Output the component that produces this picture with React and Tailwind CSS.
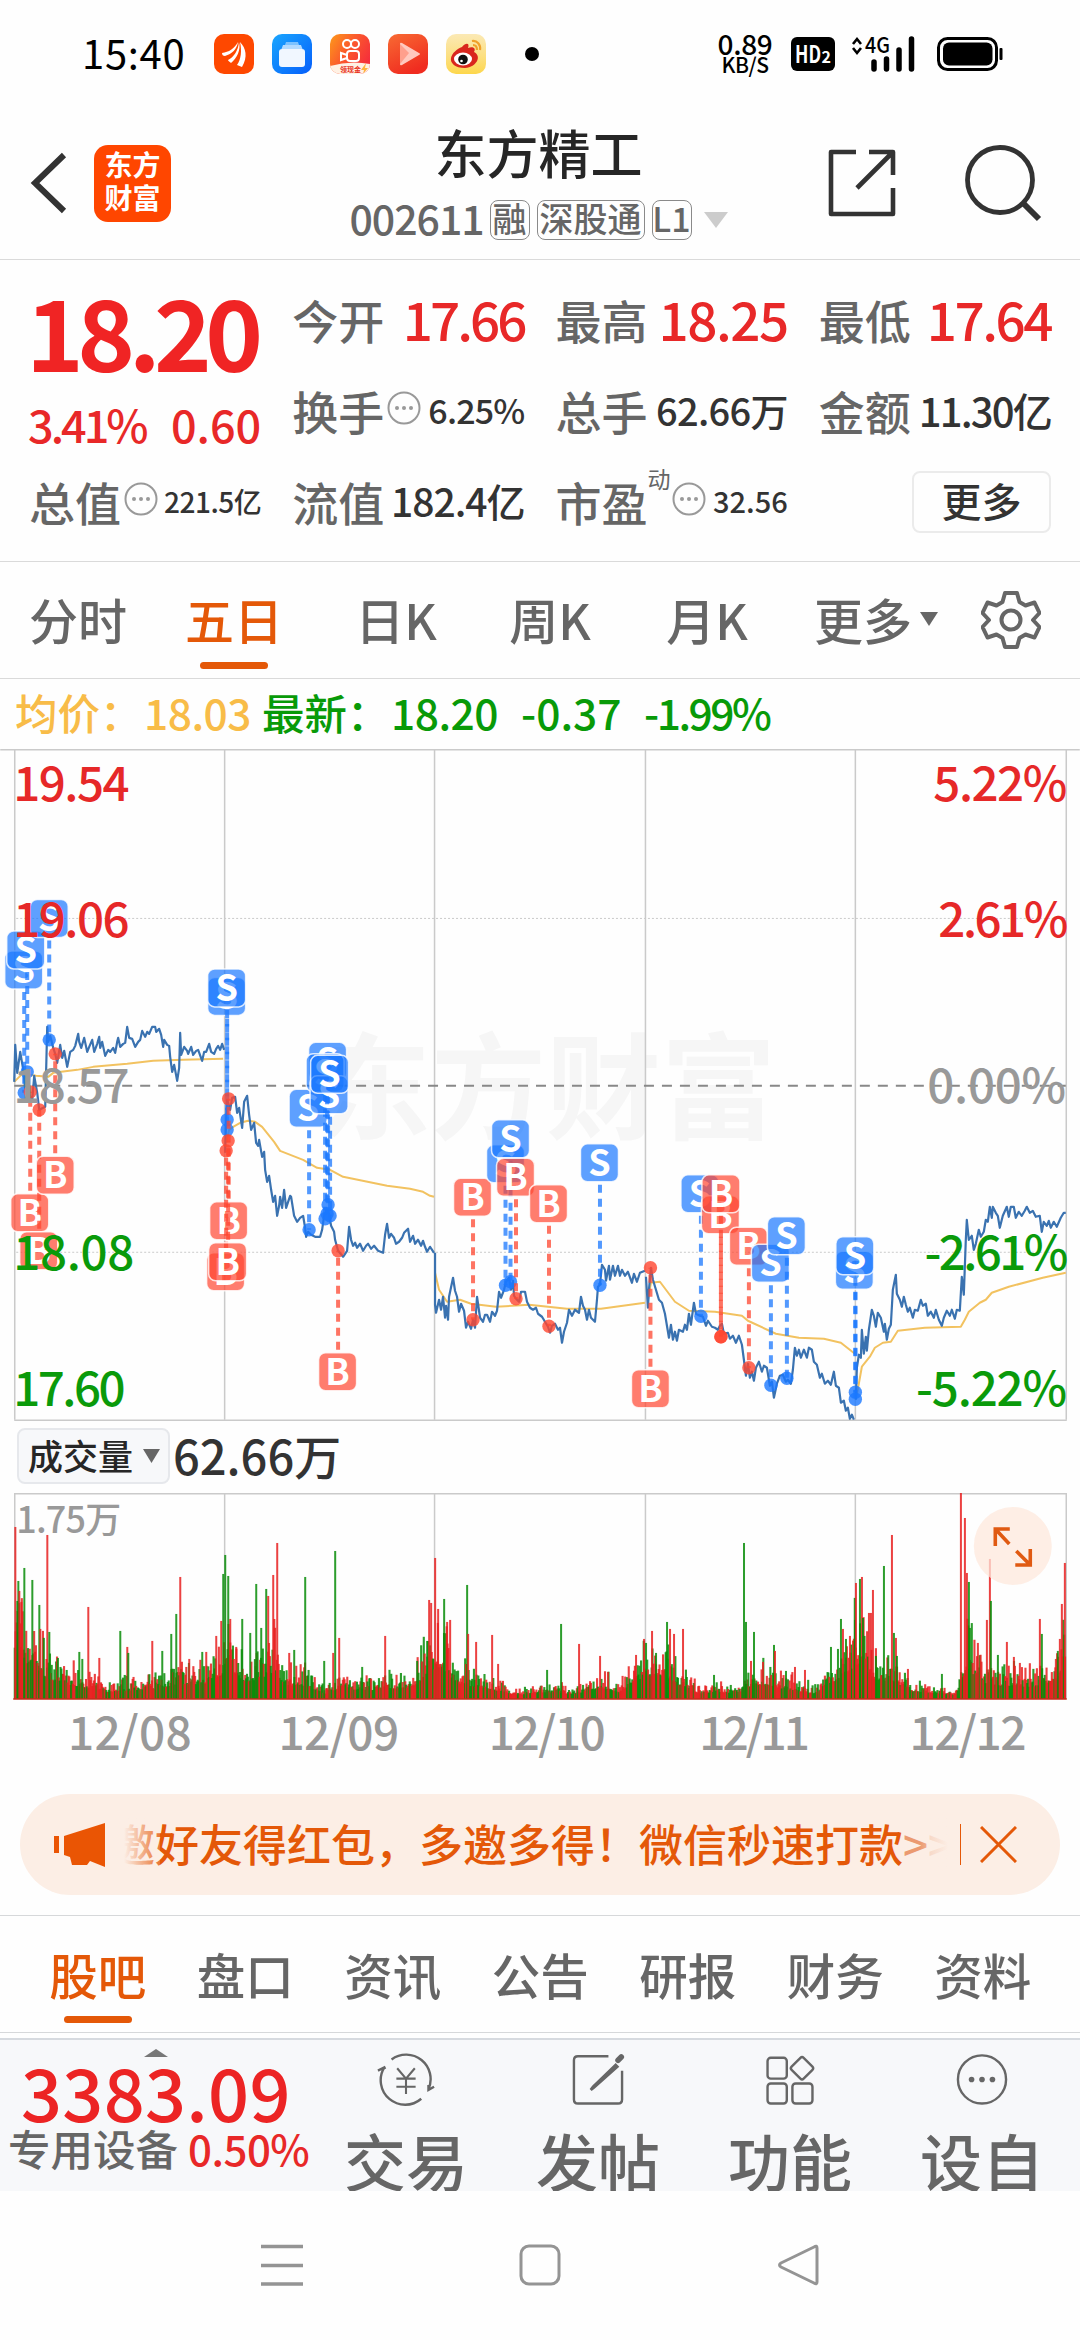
import React from 'react';

const QUOTE_RED = 'text-[#e82828]';

const periodTabs = [
  { label: '分时', cls: 'w-[156px]' },
  { label: '五日', cls: 'w-[156px]', active: true },
  { label: '日K', cls: 'w-[168px]' },
  { label: '周K', cls: 'w-[140px]' },
  { label: '月K', cls: 'w-[174px]' },
];

const infoTabs = ['股吧', '盘口', '资讯', '公告', '研报', '财务', '资料'];

const dates = [
  { label: '12/08', cls: 'tracking-[0.2px]' },
  { label: '12/09', cls: 'tracking-[-0.5px]' },
  { label: '12/10', cls: 'tracking-[-1.5px]' },
  { label: '12/11', cls: 'tracking-[-3px]' },
  { label: '12/12', cls: 'tracking-[-1.5px]' },
];

const gridX = [14.5, 224.5, 434.5, 645.5, 855.5, 1066.5];

// one polyline per trading day
const priceLines = [
  '14,1082 15,1045 17,1073 20,1052 23,1070 25,1090 28,1093 32,1100 34,1076 37,1093 39,1110 45,1107 47,1027 48,1042 50,1036 53,1048 55,1054 57,1063 60,1045 62,1058 64,1051 67,1067 70,1052 73,1050 75,1046 78,1034 79,1042 81,1048 84,1038 87,1052 89,1047 92,1040 94,1052 97,1044 99,1037 100,1048 102,1042 105,1056 108,1050 110,1052 113,1048 115,1053 117,1042 118,1038 120,1047 123,1044 125,1043 127,1027 129,1038 132,1039 135,1047 138,1042 140,1040 142,1031 145,1037 147,1032 149,1034 152,1027 155,1027 156,1032 159,1029 161,1035 163,1047 164,1040 167,1045 169,1046 170,1057 172,1072 174,1065 177,1081 179,1068 180,1033 181,1055 184,1047 187,1051 188,1054 191,1047 193,1055 196,1051 198,1050 202,1061 204,1052 206,1052 209,1044 211,1052 214,1054 216,1049 218,1046 220,1050 222,1044 224,1050',
  '225,1153 226,1120 227,1100 230,1110 232,1098 235,1097 237,1113 239,1108 242,1128 244,1102 247,1096 249,1115 251,1130 254,1123 256,1143 258,1146 259,1140 262,1157 264,1152 265,1170 267,1182 269,1176 271,1190 273,1202 275,1196 277,1216 279,1206 280,1197 282,1208 284,1190 286,1208 288,1202 290,1196 291,1197 294,1216 297,1222 300,1218 303,1216 305,1228 306,1237 308,1232 311,1235 315,1237 320,1237 322,1230 324,1216 328,1210 331,1226 334,1232 335,1240 338,1251 343,1257 347,1251 349,1227 351,1240 353,1246 355,1243 357,1248 360,1244 363,1251 366,1246 368,1244 371,1249 374,1246 378,1251 383,1253 385,1235 387,1224 389,1238 391,1234 394,1238 396,1244 399,1242 402,1238 404,1233 408,1229 410,1242 413,1236 415,1244 418,1240 421,1246 423,1241 425,1247 427,1252 430,1247 434,1253',
  '435,1253 435,1305 436,1313 439,1300 441,1310 443,1297 445,1318 446,1306 448,1320 449,1297 453,1278 455,1291 457,1297 459,1312 461,1304 464,1311 466,1328 468,1322 471,1329 473,1320 475,1328 477,1297 479,1311 480,1318 483,1322 485,1315 487,1315 490,1322 492,1312 495,1316 497,1311 499,1292 501,1298 504,1290 506,1282 509,1278 511,1290 513,1281 514,1296 516,1299 519,1302 521,1292 525,1292 527,1302 530,1308 533,1310 536,1308 538,1314 542,1317 545,1322 548,1327 550,1333 552,1326 555,1324 558,1330 560,1328 562,1343 564,1332 567,1323 569,1310 572,1316 575,1310 579,1313 581,1297 583,1306 585,1310 587,1320 589,1310 591,1318 595,1322 597,1300 598,1287 600,1285 602,1265 605,1270 606,1281 609,1266 610,1280 613,1266 615,1276 618,1266 620,1276 622,1270 625,1276 628,1272 632,1283 634,1274 637,1282 640,1273 645,1271',
  '646,1277 648,1308 649,1290 651,1268 653,1280 656,1290 659,1300 662,1303 665,1314 667,1326 669,1338 671,1325 673,1340 675,1332 677,1341 679,1330 683,1332 685,1325 687,1330 689,1314 691,1325 694,1303 696,1314 700,1316 703,1317 706,1326 708,1321 712,1327 715,1328 718,1330 720,1326 722,1324 724,1334 728,1333 730,1339 733,1336 736,1343 739,1336 742,1345 744,1360 746,1376 748,1364 750,1378 752,1372 754,1381 756,1368 759,1362 762,1372 764,1366 767,1368 770,1386 772,1382 774,1398 777,1384 780,1376 783,1375 786,1382 788,1380 791,1384 793,1370 795,1348 797,1356 799,1350 801,1358 804,1350 807,1358 809,1348 812,1350 814,1362 817,1365 820,1378 822,1374 825,1384 828,1381 831,1385 834,1372 836,1386 839,1388 841,1403 844,1401 846,1411 848,1408 850,1419 852,1415 854,1420',
  '856,1400 857,1368 859,1355 861,1358 862,1330 864,1354 866,1337 867,1351 869,1330 872,1310 874,1316 876,1327 878,1313 881,1318 884,1332 885,1324 887,1340 889,1329 891,1325 893,1290 896,1275 897,1294 900,1300 902,1307 904,1297 906,1305 908,1312 910,1308 913,1318 915,1310 918,1311 921,1300 923,1306 926,1304 928,1316 931,1312 934,1318 936,1310 939,1320 942,1326 944,1318 947,1311 950,1316 952,1310 955,1319 957,1310 960,1311 962,1277 964,1295 966,1240 967,1220 969,1240 972,1236 974,1250 976,1244 979,1230 981,1237 984,1232 986,1220 988,1222 990,1207 992,1218 993,1207 996,1213 998,1216 1000,1228 1003,1216 1007,1207 1009,1217 1011,1207 1014,1207 1016,1218 1019,1212 1022,1216 1025,1211 1027,1207 1030,1213 1033,1211 1036,1217 1040,1216 1042,1232 1044,1222 1047,1226 1049,1221 1051,1228 1054,1222 1057,1227 1061,1218 1064,1213 1066,1213',
];

const averageLines = [
  '14,1082 22,1074 36,1076 48,1077 53,1073 77,1070 93,1067 127,1064 153,1061 183,1060 223,1059',
  '226,1143 229,1130 233,1127 240,1123 248,1121 255,1122 262,1127 270,1137 274,1142 280,1151 303,1160 317,1168 330,1170 343,1177 387,1186 410,1189 423,1192 430,1196 434,1197',
  '435,1273 439,1290 447,1302 460,1300 471,1304 496,1307 529,1305 567,1309 601,1309 645,1303',
  '648,1300 651,1283 660,1282 666,1290 675,1302 689,1311 715,1312 742,1316 748,1321 776,1334 799,1338 824,1339 841,1343 855,1354',
  '857,1395 862,1367 870,1357 875,1348 883,1343 891,1342 898,1331 925,1328 961,1327 965,1320 969,1312 980,1303 986,1300 992,1293 1009,1287 1043,1278 1066,1273',
];

// [side, badge x, badge y, dot x, dot y]
const trades = [
  ['S', 23.5, 970, 24, 1093],
  ['S', 25.5, 950, 27, 1072],
  ['S', 49, 918.5, 49, 1040],
  ['B', 29.5, 1213, 30, 1092],
  ['B', 38.5, 1251, 39, 1110],
  ['B', 55, 1175.5, 55, 1054],
  ['S', 226.5, 996.5, 227, 1130],
  ['S', 226.5, 988, 227, 1120],
  ['B', 228.5, 1221, 228.5, 1099],
  ['B', 225.5, 1272, 226, 1151],
  ['B', 227.5, 1262, 228, 1141],
  ['S', 308, 1108.5, 309, 1230],
  ['S', 327.5, 1061.5, 328, 1205],
  ['S', 325, 1073, 325, 1219],
  ['S', 329, 1095, 330, 1216],
  ['S', 329.5, 1074.5, 327, 1214],
  ['B', 337.5, 1372, 338, 1251],
  ['B', 472.5, 1197.5, 473, 1320],
  ['S', 505.5, 1164, 505.5, 1285.5],
  ['S', 510.5, 1139, 510.5, 1282],
  ['B', 515.5, 1177.5, 516, 1299],
  ['B', 548.5, 1204, 549, 1326.5],
  ['S', 599.5, 1163, 600, 1285.5],
  ['B', 650.5, 1389, 650.5, 1268],
  ['S', 700, 1194, 701, 1316.5],
  ['B', 720.5, 1215, 721, 1337],
  ['B', 721, 1194, 721, 1337],
  ['B', 748.5, 1246.5, 749, 1368],
  ['S', 770.5, 1263.5, 771, 1385.5],
  ['S', 786.5, 1236, 787, 1378.5],
  ['S', 854.5, 1270.5, 855.5, 1392.5],
  ['S', 855, 1256, 855.5, 1399.5],
];

const volumeBase = [
  [14, 80], [25, 55], [40, 40], [55, 24], [75, 20], [95, 14], [110, 10], [140, 14], [160, 16],
  [180, 22], [205, 22], [220, 35], [230, 45], [245, 26], [260, 30], [275, 42], [285, 20], [305, 20],
  [325, 8], [345, 18], [360, 12], [385, 15], [415, 18], [430, 45], [442, 45], [455, 25], [475, 18],
  [490, 12], [520, 6], [545, 10], [575, 7], [600, 16], [620, 10], [645, 35], [665, 36], [680, 20],
  [700, 8], [740, 10], [755, 22], [790, 14], [815, 8], [840, 32], [860, 55], [875, 30], [895, 25],
  [910, 12], [955, 6], [961, 20], [967, 50], [980, 25], [1000, 20], [1030, 18], [1045, 22], [1058, 32], [1067, 50],
];

const volumeSpikes = [
  [15, 172, 'r'], [17, 98, 'g'], [18, 118, 'g'], [19, 108, 'r'], [21, 97, 'r'], [24, 131, 'g'], [32, 119, 'g'],
  [39, 94, 'g'], [40, 70, 'r'], [47, 164, 'r'], [49, 67, 'g'], [79, 47, 'g'], [82, 40, 'g'], [88, 92, 'r'], [99, 41, 'r'],
  [120, 68, 'g'], [127, 52, 'r'], [128, 46, 'g'], [152, 58, 'r'], [162, 48, 'g'], [171, 65, 'g'], [176, 85, 'g'],
  [180, 122, 'r'], [189, 40, 'r'], [202, 47, 'g'], [206, 47, 'r'], [216, 63, 'r'], [221, 78, 'r'], [223, 125, 'g'],
  [225, 144, 'g'], [228, 123, 'g'], [230, 80, 'r'], [236, 52, 'r'], [242, 80, 'g'], [250, 66, 'g'], [256, 115, 'g'],
  [261, 71, 'g'], [266, 110, 'g'], [268, 103, 'r'], [273, 124, 'r'], [277, 156, 'r'], [289, 46, 'r'], [294, 49, 'g'],
  [305, 122, 'g'], [324, 38, 'g'], [333, 46, 'r'], [335, 148, 'g'], [339, 61, 'r'], [362, 32, 'g'], [385, 63, 'r'],
  [417, 38, 'g'], [427, 58, 'g'], [429, 99, 'r'], [431, 96, 'r'], [435, 141, 'r'], [438, 90, 'r'], [444, 100, 'g'],
  [447, 77, 'r'], [450, 79, 'r'], [467, 114, 'g'], [468, 65, 'r'], [476, 57, 'r'], [492, 64, 'r'], [498, 35, 'r'],
  [547, 29, 'g'], [561, 75, 'g'], [579, 55, 'r'], [600, 43, 'r'], [608, 27, 'r'], [636, 44, 'r'], [644, 60, 'r'],
  [646, 56, 'g'], [652, 68, 'r'], [656, 46, 'g'], [667, 77, 'g'], [670, 70, 'r'], [674, 65, 'r'], [683, 70, 'r'],
  [714, 24, 'g'], [744, 156, 'g'], [746, 77, 'g'], [751, 38, 'r'], [754, 67, 'g'], [763, 37, 'r'], [774, 54, 'g'],
  [775, 48, 'r'], [786, 28, 'g'], [795, 32, 'r'], [805, 29, 'r'], [831, 52, 'g'], [838, 50, 'g'], [841, 80, 'g'],
  [843, 70, 'r'], [846, 60, 'g'], [850, 63, 'r'], [855, 79, 'g'], [856, 116, 'r'], [860, 120, 'g'], [862, 122, 'r'],
  [863, 81, 'g'], [869, 86, 'r'], [873, 109, 'r'], [871, 86, 'r'], [876, 43, 'g'], [884, 133, 'g'], [892, 164, 'r'],
  [894, 66, 'g'], [896, 61, 'r'], [897, 43, 'g'], [908, 30, 'r'], [942, 25, 'g'], [961, 206, 'r'], [965, 181, 'r'],
  [967, 126, 'r'], [969, 117, 'g'], [970, 71, 'g'], [978, 56, 'r'], [987, 79, 'r'], [990, 140, 'r'], [991, 98, 'g'],
  [998, 44, 'g'], [1007, 57, 'r'], [1014, 42, 'r'], [1020, 36, 'r'], [1040, 80, 'r'], [1042, 65, 'g'], [1056, 40, 'r'],
  [1058, 48, 'g'], [1060, 60, 'r'], [1062, 95, 'r'], [1065, 136, 'r'],
];

const baseAt = (x) => {
  const i = Math.max(1, volumeBase.findIndex(([px]) => px >= x));
  const [x0, y0] = volumeBase[i - 1];
  const [x1, y1] = volumeBase[i];
  return y0 + ((y1 - y0) * (x - x0)) / (x1 - x0);
};

const buildBars = () => {
  const bars = [];
  let seed = 7;
  const rand = () => {
    seed = (seed * 16807) % 2147483647;
    return seed / 2147483647;
  };
  for (let x = 14.5; x < 1066; x += 0.88) {
    const h = baseAt(x) * (0.65 + rand() * rand() * 1.5);
    bars.push([x, h, rand() > 0.46 ? 'r' : 'g']);
  }
  return bars;
};

const volumeBars = buildBars();

const barColor = { r: '#e82020', g: '#088c08' };

const StatusBar = () => (
  <div className="flex h-[108px] items-center pl-[82px] pr-[77px] text-black">
    <span className="mb-1 w-[132px] text-[40px] leading-none tracking-[0.7px]">15:40</span>
    <div className="flex gap-[18px]">
      <svg width="40" height="40" viewBox="0 0 40 40">
        <rect width="40" height="40" rx="10" fill="#fe4800" />
        <path d="M8 19c7-1 12-4 16-11-1 7-6 12-13 14-2 0-3-1-3-3zM14 26c6-3 10-9 11-18 2 8-2 16-8 21-1-1-3-2-3-3zM23 31c4-6 5-14 3-23 6 6 8 15 2 25z" fill="#fff" />
      </svg>
      <svg width="40" height="40" viewBox="0 0 40 40">
        <defs>
          <linearGradient id="files" x1="0" y1="0" x2="1" y2="1">
            <stop offset="0" stopColor="#1aa6fe" />
            <stop offset="1" stopColor="#055efb" />
          </linearGradient>
        </defs>
        <rect width="40" height="40" rx="10" fill="url(#files)" />
        <path d="M14 8h12l1 3H13z" fill="#7cc2ff" />
        <path d="M11 11h18l1.500 4h-21z" fill="#b2daff" />
        <rect x="7" y="15" width="26" height="18" rx="3" fill="#f1f7ff" />
      </svg>
      <svg width="40" height="40" viewBox="0 0 40 40">
        <defs>
          <linearGradient id="ks" x1="0" y1="0" x2="1" y2="0.600">
            <stop offset="0" stopColor="#fd9a1b" />
            <stop offset="0.500" stopColor="#fb5a2c" />
            <stop offset="1" stopColor="#f52f3b" />
          </linearGradient>
          <clipPath id="ksClip"><rect width="40" height="40" rx="10" /></clipPath>
        </defs>
        <g clipPath="url(#ksClip)">
          <rect width="40" height="40" fill="url(#ks)" />
          <path d="M0 32q20-6 40-2v10H0z" fill="#fff1e4" />
          <g fill="none" stroke="#fff" strokeWidth="2">
            <circle cx="17" cy="10" r="4" />
            <circle cx="25" cy="10" r="4" />
            <rect x="17" y="17" width="12" height="10" rx="3" />
            <path d="M17 21l-6-2v7l6-2" />
          </g>
          <text x="10" y="38" fontSize="7" fontWeight="700" fill="#e8321e">领现金</text>
          <path d="M36 29l-5 7h3l-1 4 5-6h-3z" fill="#ffb23e" />
        </g>
      </svg>
      <svg width="40" height="40" viewBox="0 0 40 40">
        <defs>
          <linearGradient id="video" x1="0" y1="0" x2="0.500" y2="1">
            <stop offset="0" stopColor="#f86b33" />
            <stop offset="1" stopColor="#f02c20" />
          </linearGradient>
        </defs>
        <rect width="40" height="40" rx="10" fill="url(#video)" />
        <path d="M12 10q0-2 2-1l17 10q2 1 0 2L14 31q-2 1-2-1z" fill="#ffc9bf" />
        <path d="M12 10v20l9-11z" fill="#ff9f8d" />
      </svg>
      <div className="flex h-10 w-10 items-center justify-center rounded-[10px] bg-linear-to-b from-[#fbe9b4] to-[#fdd74a]">
        <svg width="34" height="34" viewBox="0 0 34 34">
          <path d="M13 10c4-5 8-4 6 1 6-2 8 1 6 4 8 4 3 15-9 16C6 31 1 26 2 21c1-5 6-9 11-11z" fill="#d9261d" />
          <ellipse cx="14" cy="22" rx="9" ry="6.500" fill="#fff" />
          <circle cx="14" cy="22.500" r="4.800" fill="#111" />
          <circle cx="12.500" cy="24" r="1.300" fill="#fff" />
          <path d="M23 4c5-1 9 4 8 9M24 8c3 0 4 2 4 5" fill="none" stroke="#f0a12b" strokeWidth="2.200" />
        </svg>
      </div>
    </div>
    <div className="ml-[39px] h-3.5 w-3.5 rounded-full bg-black" />
    <div className="ml-auto flex items-center">
      <div className="mr-4 flex w-[60px] flex-col items-center font-medium">
        <span className="text-[28px] leading-[22px] tracking-[-0.3px]">0.89</span>
        <span className="text-[21px] leading-[21px] tracking-[-0.5px]">KB/S</span>
      </div>
      <svg width="44" height="34" viewBox="0 0 44 34" className="mr-4">
        <rect width="44" height="34" rx="6" />
        <text x="4" y="26" fontSize="24" fontWeight="700" fill="#fff" textLength="26" lengthAdjust="spacingAndGlyphs">HD</text>
        <text x="30.500" y="26" fontSize="16" fontWeight="700" fill="#fff">2</text>
      </svg>
      <svg width="66" height="36" viewBox="0 0 66 36" className="mr-5">
        <path d="M2 8l4-5 4 5M2 12l4 5 4-5" fill="none" stroke="#000" strokeWidth="2.600" />
        <text x="14" y="17" fontSize="22" fontWeight="500" textLength="25" lengthAdjust="spacingAndGlyphs">4G</text>
        <path d="M23 26v7M35.500 23v10M48 14v19M60.500 3v30" stroke="#000" strokeWidth="5.500" strokeLinecap="round" />
      </svg>
      <svg width="66" height="34" viewBox="0 0 66 34">
        <rect x="1.500" y="1.500" width="58" height="31" rx="9" fill="none" stroke="#000" strokeWidth="3" />
        <rect x="6" y="5.500" width="49.500" height="23" rx="6" />
        <rect x="62.500" y="11" width="3" height="12" rx="1" />
      </svg>
    </div>
  </div>
);

const Badge = ({ children, cls }) => (
  <span className={`flex h-10 items-center justify-center rounded-[8px] border border-[#8a8a8a] pb-1 text-[34px] font-medium leading-none ${cls}`}>
    {children}
  </span>
);

const Header = () => (
  <div className="flex h-[152px] items-center border-b border-[#dadada] pl-[29px] pr-[38px]">
    <svg width="40" height="64" viewBox="0 0 40 64">
      <path d="M35 4L6 32l29 28" fill="none" stroke="#333" strokeWidth="6" />
    </svg>
    <div className="ml-[25px] flex h-[77px] w-[77px] flex-col items-center justify-center rounded-[14px] bg-[#ff4600] pb-1 text-[28px] font-bold leading-[33px] text-white">
      <span>东方</span>
      <span>财富</span>
    </div>
    <div className="flex flex-1 flex-col items-center pl-[78px]">
      <h1 className="text-[52px] font-medium leading-[56px] text-[#262626]">东方精工</h1>
      <div className="mt-[17px] flex items-center text-[#666]">
        <span className="mb-1 mr-[9px] w-[131px] text-[41px] font-medium leading-none tracking-[-1px]">002611</span>
        <Badge cls="w-10 mr-[7px]">融</Badge>
        <Badge cls="w-[108px] mr-[7px]">深股通</Badge>
        <Badge cls="w-10">L1</Badge>
        <svg width="24" height="16" viewBox="0 0 24 16" className="ml-3">
          <path d="M0 0h24L12 16z" fill="#ccc" />
        </svg>
      </div>
    </div>
    <svg width="68" height="68" viewBox="0 0 68 68" className="ml-auto mr-[68px]">
      <path d="M28 3H3v62h62V39M41 3h24v23M64 4L29 39" fill="none" stroke="#333" strokeWidth="4.600" strokeLinejoin="round" />
    </svg>
    <svg width="78" height="78" viewBox="0 0 78 78">
      <circle cx="36" cy="36" r="32.500" fill="none" stroke="#333" strokeWidth="4.800" />
      <path d="M59 59l16 16" stroke="#333" strokeWidth="6" />
    </svg>
  </div>
);

const Dots = ({ cls = '' }) => (
  <svg width="34" height="34" viewBox="0 0 34 34" className={cls}>
    <circle cx="17" cy="17" r="15.500" fill="none" stroke="#999" strokeWidth="2" />
    <circle cx="10" cy="17" r="2" fill="#999" />
    <circle cx="17" cy="17" r="2" fill="#999" />
    <circle cx="24" cy="17" r="2" fill="#999" />
  </svg>
);

const Quote = ({ label, value, cls, sup, dots }) => (
  <div className="flex h-[60px] items-center">
    <span className="text-[46px] font-medium leading-none text-[#666]">{label}</span>
    {sup && <span className="-mr-0.5 mb-11 text-[23px] leading-none text-[#666]">{sup}</span>}
    {dots && <Dots cls="ml-[3px] mb-1" />}
    <span className={`ml-auto font-medium leading-none ${cls}`}>{value}</span>
  </div>
);

const Quotes = () => (
  <div className="grid h-[302px] grid-cols-4 content-start gap-x-[31px] border-b border-[#dadada] px-[29px] pt-[29px]">
    <div className="flex h-[182px] flex-col">
      <span className="ml-[-3px] mt-[-6px] text-[98px] font-bold leading-[92px] tracking-[-6.5px] text-[#f02424]">18.20</span>
      <div className={`mt-[26px] flex justify-between text-[45px] font-medium leading-none ${QUOTE_RED}`}>
        <span className="ml-[-1px] tracking-[-3px]">3.41%</span>
        <span>0.60</span>
      </div>
    </div>
    <div className="col-span-3 grid grid-cols-3 content-start gap-x-[31px] gap-y-[31px]">
      <Quote label="今开" value="17.66" cls={`text-[53px] tracking-[-3px] ${QUOTE_RED}`} />
      <Quote label="最高" value="18.25" cls={`text-[53px] tracking-[-1.5px] ${QUOTE_RED}`} />
      <Quote label="最低" value="17.64" cls={`text-[53px] tracking-[-2.500px] ${QUOTE_RED}`} />
      <Quote label="换手" value="6.25%" dots cls="text-[34px] tracking-[-0.8px] text-[#333]" />
      <Quote label="总手" value="62.66万" cls="text-[38px] tracking-[-0.7px] text-[#333]" />
      <Quote label="金额" value="11.30亿" cls="text-[40px] tracking-[-1.8px] text-[#333]" />
    </div>
    <Quote label="总值" value="221.5亿" dots cls="text-[28px] tracking-[-0.5px] text-[#333]" />
    <Quote label="流值" value="182.4亿" cls="text-[39px] tracking-[-1px] text-[#333]" />
    <Quote label="市盈" value="32.56" sup="动" dots cls="text-[29px] text-[#333]" />
    <button className="ml-auto h-[62px] w-[139px] rounded-lg border-2 border-[#ebebeb] pb-1 text-[40px] font-medium leading-none text-[#333]">
      更多
    </button>
  </div>
);

const PeriodTabs = () => (
  <div className="flex h-[117px] items-stretch border-b border-[#dadada] text-[49px] font-medium leading-none text-[#666]">
    {periodTabs.map((tab) => (
      <div key={tab.label} className={`flex flex-col items-center pt-[32px] ${tab.cls} ${tab.active ? 'text-[#e45808]' : ''}`}>
        <span>{tab.label}</span>
        {tab.active && <div className="mt-[19px] h-[7px] w-[68px] rounded-full bg-[#e45808]" />}
      </div>
    ))}
    <div className="ml-[20px] flex items-start pt-[32px]">
      更多
      <svg width="18" height="14" viewBox="0 0 18 14" className="ml-2 mt-[18px]">
        <path d="M0 0h18L9 14z" fill="#666" />
      </svg>
    </div>
    <svg width="60" height="60" viewBox="0 0 60 60" className="ml-[43px] mt-[28px]" fill="none" stroke="#666" strokeWidth="4" strokeLinejoin="round">
      <path d="M24 3h12l2.500 9 6 3.500 9-3 5 10.500-6.500 7 6.500 7-5 10.500-9-3-6 3.500-2.500 9H24l-2.500-9-6-3.500-9 3L1.500 37 8 30l-6.500-7 5-10.500 9 3 6-3.500z" />
      <circle cx="30" cy="30" r="9.500" />
    </svg>
  </div>
);

const PriceSummary = () => (
  <div className="flex h-[70px] items-center whitespace-pre pb-[3px] pl-[15px] text-[42.500px] font-medium leading-none text-[#089a08]">
    <span className="w-[129px] text-[#f8bc48]">均价：</span>
    <span className="w-[118px] tracking-[-0.5px] text-[#f8bc48]">18.03</span>
    <span className="w-[129px]">最新：</span>
    <span className="w-[130px] tracking-[-0.5px]">18.20</span>
    <span className="w-[123px]">-0.37</span>
    <span className="tracking-[-2.5px]">-1.99%</span>
  </div>
);

const TradeMarker = ({ side, x, y, dotX, dotY }) => {
  const color = side === 'S' ? '#1a78ff' : '#ff4630';
  const edge = y < dotY ? y + 22 : y - 22;
  return (
    <g>
      <line x1={dotX} y1={edge} x2={dotX} y2={dotY} stroke={color} strokeWidth="4" strokeDasharray="8 6" opacity="0.750" />
      <circle cx={dotX} cy={dotY} r="6.700" fill={color} opacity="0.800" />
      <rect x={x - 19} y={y - 19} width="38" height="38" rx="7" fill={color} fillOpacity="0.700" stroke="#fff" strokeOpacity="0.800" strokeWidth="1.500" />
      <text x={x} y={y + 13} fontSize="36" fontWeight="700" textAnchor="middle" fill="#fff">{side}</text>
    </g>
  );
};

const PriceChart = () => (
  <svg width="1080" height="673" viewBox="0 749 1080 673" className="block">
    <text x="316" y="1130" fontSize="115" fontWeight="700" fill="#f6f6f6">东方财富</text>
    <g stroke="#cacaca" strokeWidth="1.500" fill="none">
      <path d="M0 749.700H1080" />
      <path d="M14 1420.500H1067" />
      {gridX.map((x) => <path key={x} d={`M${x} 750V1420`} />)}
      <path d="M16 918.500H1066M16 1252.500H1066" strokeWidth="1" strokeDasharray="2 2" />
    </g>
    <path d="M14 1086H1066" stroke="#888" strokeWidth="2" strokeDasharray="10 8" />
    <g fill="none" strokeLinejoin="round">
      {averageLines.map((pts) => <polyline key={pts} points={pts} stroke="#f2c260" strokeWidth="2" />)}
      {priceLines.map((pts) => <polyline key={pts} points={pts} stroke="#3a72b0" strokeWidth="2.200" />)}
    </g>
    {trades.map(([side, x, y, dotX, dotY]) => (
      <TradeMarker key={`${x}-${y}`} side={side} x={x} y={y} dotX={dotX} dotY={dotY} />
    ))}
    <g fontSize="47.500" fontWeight="500" letterSpacing="-1.500">
      <g fill="#e62828">
        <text x="13" y="801">19.54</text>
        <text x="13" y="937">19.06</text>
        <text x="1066" y="801" textAnchor="end">5.22%</text>
        <text x="1066" y="937" textAnchor="end" letterSpacing="-2.500">2.61%</text>
      </g>
      <g fill="#999">
        <text x="13" y="1103">18.57</text>
        <text x="1066" y="1103" textAnchor="end" letterSpacing="-0.300">0.00%</text>
      </g>
      <g fill="#0a9a0a">
        <text x="13" y="1270" letterSpacing="-0.300">18.08</text>
        <text x="13" y="1406" letterSpacing="-2.500">17.60</text>
        <text x="1066" y="1270" textAnchor="end" letterSpacing="-2.600">-2.61%</text>
        <text x="1066" y="1406" textAnchor="end" letterSpacing="-1.200">-5.22%</text>
      </g>
    </g>
  </svg>
);

const VolumeHeader = () => (
  <div className="flex h-[72px] items-center pl-[17px]">
    <div className="mb-0.5 mr-[3px] flex h-[56px] w-[153px] items-center rounded-lg border-2 border-[#e6e8ec] bg-[#f7f8fa] pb-1 pl-[9px] text-[35px] font-medium leading-none text-[#262626]">
      成交量
      <svg width="17" height="14" viewBox="0 0 17 14" className="ml-2.5 mt-1">
        <path d="M0 0h17L8.500 14z" fill="#666" />
      </svg>
    </div>
    <span className="mb-1.5 text-[47px] font-medium leading-none text-[#333]">62.66万</span>
  </div>
);

const VolumeChart = () => (
  <svg width="1080" height="207" viewBox="0 1494 1080 207" className="block">
    <g stroke="#cacaca" strokeWidth="1.500" fill="none">
      <path d="M14 1494.750H1067" />
      {gridX.map((x) => <path key={x} d={`M${x} 1494V1700`} />)}
    </g>
    {volumeBars.map(([x, h, c]) => (
      <rect key={x} x={x - 1} y={1700 - h} width="2.100" height={h} fill={barColor[c]} opacity="0.850" />
    ))}
    {volumeSpikes.map(([x, h, c]) => (
      <rect key={`${x}-${h}`} x={x - 0.9} y={1700 - h} width="2" height={h} fill={barColor[c]} opacity="0.850" />
    ))}
    <path d="M13 1700H1067" stroke="#c42a1a" strokeWidth="1.500" />
    <text x="16" y="1534" fontSize="36" letterSpacing="-0.800" fontWeight="500" fill="#999">1.75万</text>
    <circle cx="1013" cy="1547" r="39" fill="#fde8dc" opacity="0.750" />
    <path d="M1010 1533H995.500V1550M996 1533.500L1009.500 1548M1015.500 1569H1030.500V1553M1030 1568.500L1016.500 1555" fill="none" stroke="#e05a12" strokeWidth="3.600" transform="translate(0 -3)" />
  </svg>
);

const DateRow = () => (
  <div className="grid h-[94px] grid-cols-5 px-[14px] pt-[7px] text-[46px] font-medium leading-none text-[#999]">
    {dates.map((d) => (
      <span key={d.label} className={`pl-[54px] ${d.cls}`}>{d.label}</span>
    ))}
  </div>
);

const Banner = () => (
  <div className="mx-5 flex h-[101px] items-center rounded-full bg-[#fceee5] pl-[34px] text-[#e45808]">
    <svg width="52" height="46" viewBox="0 0 52 46">
      <path d="M0 14h5v17H0zM10 14L51 1v44L36 39l-3 4H18l-2-8-6-2z" fill="#ea5504" />
    </svg>
    <div className="relative mb-1 ml-[18px] w-[824px] overflow-hidden">
      <p className="-ml-[13px] flex whitespace-pre text-[44px] font-medium leading-[56px]">
        邀好友得红包，多邀多得！微信秒速打款<span className="text-[#eb9a70]">&gt;</span><span className="text-[#f5cdb8]">&gt;</span>
      </p>
      <div className="absolute inset-y-0 left-0 w-9 bg-linear-to-r from-[#fceee5] to-[#fceee5]/20" />
      <div className="absolute inset-y-0 right-0 w-7 bg-linear-to-l from-[#fceee5] to-[#fceee5]/0" />
    </div>
    <div className="ml-[12px] h-[41px] w-px bg-[#e45808]" />
    <svg width="37" height="37" viewBox="0 0 37 37" className="ml-[19px]">
      <path d="M1 1l35 35M36 1L1 36" stroke="#e45808" strokeWidth="3" />
    </svg>
  </div>
);

const InfoTabs = () => (
  <div className="flex h-[118px] border-y border-[#d6d8da] pl-[24px] text-[48.500px] font-medium leading-none text-[#666]">
    {infoTabs.map((tab, i) => (
      <div key={tab} className={`flex w-[147.500px] flex-col items-center pt-[34px] ${i === 0 ? 'text-[#e45808]' : ''}`}>
        <span>{tab}</span>
        {i === 0 && <div className="mt-[17px] h-[7px] w-[68px] rounded-full bg-[#e45808]" />}
      </div>
    ))}
  </div>
);

const iconProps = { width: 66, height: 66, viewBox: '0 0 66 66', fill: 'none', stroke: '#666', strokeWidth: 3 };

const TradeIcon = () => (
  <svg {...iconProps} width="74" viewBox="-4 0 74 66">
    <path d="M15 8A30.500 30.500 0 0 1 61 45M52 57A30.500 30.500 0 0 1 6 18M-2 22l8-4 1 2M61 40v6l7-4" />
    <path d="M22 19l11 13 11-13M21 32h24M21 42h24M33 32v19" strokeWidth="2.600" />
  </svg>
);

const PostIcon = () => (
  <svg {...iconProps}>
    <path d="M46 4H8q-5 0-5 5v49q0 5 5 5h50q5 0 5-5V22" />
    <path d="M55 15L27 42l-3 4 4-3 29-26z" fill="#666" strokeWidth="3.500" />
    <path d="M58 9l4-4" strokeWidth="7" strokeLinecap="round" />
  </svg>
);

const AppsIcon = () => (
  <svg {...iconProps}>
    <rect x="5" y="6" width="24" height="26" rx="4" />
    <path d="M46 6q2-2 4 0l11 11q2 2 0 4L50 32q-2 2-4 0L35 21q-2-2 0-4z" />
    <rect x="5" y="38" width="24" height="25" rx="4" />
    <rect x="36" y="38" width="25" height="25" rx="4" />
  </svg>
);

const MoreIcon = () => (
  <svg {...iconProps}>
    <circle cx="33" cy="33" r="30" />
    <g fill="#666" stroke="none">
      <circle cx="20" cy="33" r="3.500" />
      <circle cx="33" cy="33" r="3.500" />
      <circle cx="46" cy="33" r="3.500" />
    </g>
  </svg>
);

const actions = [
  { label: '交易', Icon: TradeIcon },
  { label: '发帖', Icon: PostIcon },
  { label: '功能', Icon: AppsIcon },
  { label: '设自', Icon: MoreIcon },
];

const BottomBar = () => (
  <div className="mt-[5px] flex h-[153px] overflow-hidden border-t-2 border-[#d6dadf] bg-[#f7f8fa]">
    <div className="flex w-[310px] flex-col">
      <svg width="24" height="8" viewBox="0 0 24 8" className="ml-36 mt-[9px]">
        <path d="M12 0l12 8H0z" fill="#777" />
      </svg>
      <span className="mt-[-2px] pl-[21px] text-[72px] font-medium leading-[71px] tracking-[0.3px] text-[#ec2424]">3383.09</span>
      <div className="flex items-center pl-2 leading-[44px]">
        <span className="text-[42.500px] font-medium text-[#666]">专用设备</span>
        <span className={`ml-2.5 text-[42px] font-medium tracking-[-0.5px] ${QUOTE_RED}`}>0.50%</span>
      </div>
    </div>
    {actions.map(({ label, Icon }) => (
      <div key={label} className="flex w-[192px] shrink-0 flex-col items-center pt-[13px]">
        <Icon />
        <span className="mt-[23px] text-[62px] font-medium leading-[62px] text-[#666]">{label}</span>
      </div>
    ))}
  </div>
);

const SystemNav = () => (
  <div className="flex h-[149px] justify-between px-[261px] pt-[53px]">
    <svg width="42" height="42" viewBox="0 0 42 42">
      <path d="M0 2.500h42M0 21.500h42M0 40h42" stroke="#949494" strokeWidth="3.400" />
    </svg>
    <svg width="42" height="42" viewBox="0 0 42 42">
      <rect x="2" y="2" width="38" height="38" rx="8" fill="none" stroke="#949494" strokeWidth="3" />
    </svg>
    <svg width="42" height="42" viewBox="0 0 42 42">
      <path d="M37 3q3-2 3 1v34q0 3-3 1L4 23q-3-2 0-4z" fill="none" stroke="#949494" strokeWidth="3" strokeLinejoin="round" />
    </svg>
  </div>
);

const App = () => {
  return (
    <div className="flex h-[2340px] w-[1080px] flex-col overflow-hidden bg-[#fefefe] font-['Noto_Sans_CJK_SC',sans-serif]">
      <StatusBar />
      <Header />
      <Quotes />
      <PeriodTabs />
      <PriceSummary />
      <PriceChart />
      <VolumeHeader />
      <VolumeChart />
      <DateRow />
      <Banner />
      <div className="h-[20px] shrink-0" />
      <InfoTabs />
      <BottomBar />
      <SystemNav />
    </div>
  );
};

export default App;
